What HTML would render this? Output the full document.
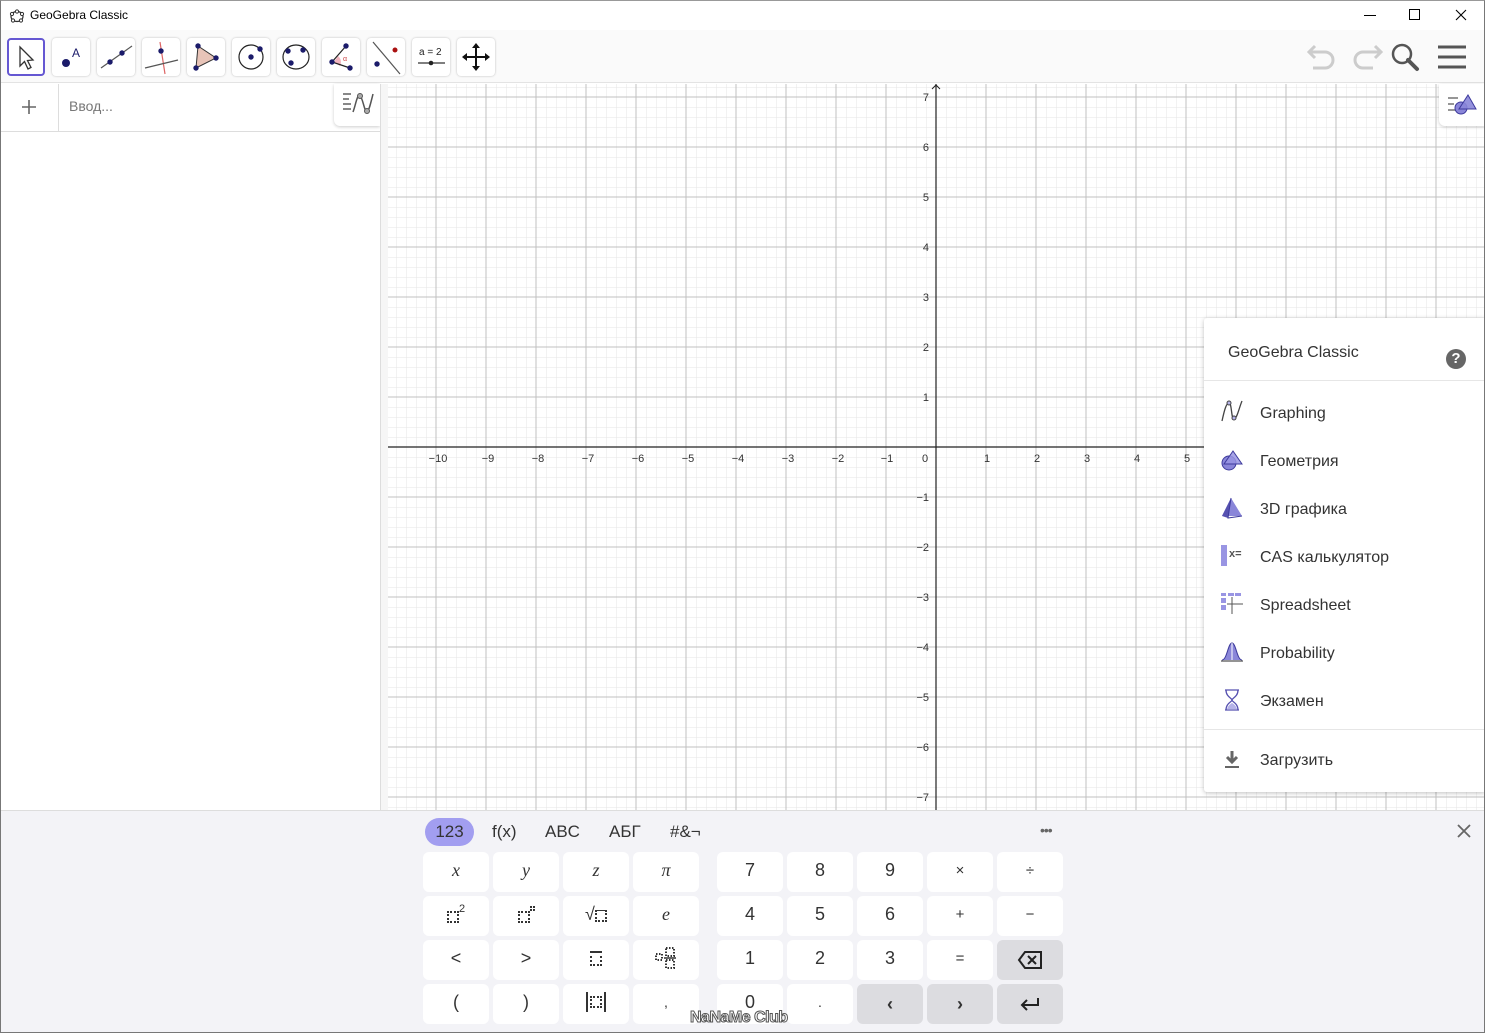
<!DOCTYPE html>
<html><head><meta charset="utf-8">
<style>
*{margin:0;padding:0;box-sizing:border-box}
body{width:1485px;height:1033px;position:relative;overflow:hidden;background:#fff;font-family:"Liberation Sans","DejaVu Sans",sans-serif;color:#333}
.abs{position:absolute}
.tb{position:absolute;top:38px;width:38px;height:38px;border-radius:4px;background:#fff;box-shadow:0 0 2px rgba(0,0,0,.25)}
.key{position:absolute;width:66px;height:40px;background:#fff;border-radius:6px;display:flex;align-items:center;justify-content:center;font-size:18px;color:#333;padding-bottom:4px}
.key.g{background:#dcdce0;padding-bottom:0}
.it{position:absolute;left:1260px;font-size:16px;color:#333;margin-top:2px}
.ic{position:absolute;left:1220px}
.db{display:inline-block;width:12px;height:12px;border:2px dotted #333}
</style></head><body>
<div class="abs" style="left:0;top:0;width:1485px;height:1033px;border:1px solid #777;border-top:1px solid #999;z-index:50;pointer-events:none"></div>
<svg class="abs" style="left:9px;top:8px" width="16" height="16" viewBox="0 0 16 16"><ellipse cx="8" cy="8.5" rx="6" ry="5" fill="none" stroke="#333" stroke-width="1.2"/><g fill="#fff" stroke="#333"><circle cx="3" cy="6" r="1.6"/><circle cx="8" cy="3.5" r="1.6"/><circle cx="13" cy="6" r="1.6"/><circle cx="12" cy="12.5" r="1.6"/><circle cx="4" cy="12.5" r="1.6"/></g></svg>
<div class="abs" style="left:30px;top:8px;font-size:12px;color:#000">GeoGebra Classic</div>
<div class="abs" style="left:1364px;top:15px;width:12px;height:1px;background:#000"></div>
<div class="abs" style="left:1409px;top:9px;width:11px;height:11px;border:1px solid #000"></div>
<svg class="abs" style="left:1455px;top:9px" width="12" height="12"><path d="M1 1L11 11M11 1L1 11" stroke="#000" stroke-width="1.1"/></svg>
<div class="abs" style="left:0;top:30px;width:1485px;height:53px;background:#fafafa;border-bottom:1px solid #e3e3e3"></div>
<div class="tb" style="left:7px;border:2px solid #6557d2;box-shadow:none"><svg width="34" height="34"><path d="M11 7L11 26L15.5 21.5L19 29L22 27.5L18.5 20.5L24 20Z" fill="#fff" stroke="#333" stroke-width="1.3"/></svg></div>
<div class="tb" style="left:52px"><svg width="38" height="38"><circle cx="14" cy="25" r="4" fill="#1b1b6a"/><text x="20" y="19" font-size="12" fill="#1b1b6a" font-family="Liberation Sans">A</text></svg></div>
<div class="tb" style="left:97px"><svg width="38" height="38"><path d="M4 30L35 8" stroke="#555" stroke-width="1.2"/><circle cx="13" cy="24" r="2.7" fill="#1b1b6a"/><circle cx="25" cy="15" r="2.7" fill="#1b1b6a"/></svg></div>
<div class="tb" style="left:142px"><svg width="38" height="38"><path d="M18 4L23 36" stroke="#d66" stroke-width="1.2"/><path d="M3 30L36 22" stroke="#555" stroke-width="1.2"/><circle cx="19" cy="13" r="2.7" fill="#1b1b6a"/></svg></div>
<div class="tb" style="left:187px"><svg width="38" height="38"><path d="M11 8L29 20L9 30Z" fill="#e8c4b8" stroke="#333" stroke-width="1"/><circle cx="11" cy="8" r="2.7" fill="#1b1b6a"/><circle cx="29" cy="20" r="2.7" fill="#1b1b6a"/><circle cx="9" cy="30" r="2.7" fill="#1b1b6a"/></svg></div>
<div class="tb" style="left:232px"><svg width="38" height="38"><circle cx="19" cy="19" r="12" fill="none" stroke="#222" stroke-width="1.2"/><circle cx="19" cy="19" r="2.7" fill="#1b1b6a"/><circle cx="28" cy="11" r="2.7" fill="#1b1b6a"/></svg></div>
<div class="tb" style="left:277px"><svg width="38" height="38"><ellipse cx="19" cy="19" rx="13" ry="12" fill="none" stroke="#222" stroke-width="1.2"/><circle cx="11" cy="13" r="2.7" fill="#1b1b6a"/><circle cx="26" cy="12" r="2.7" fill="#1b1b6a"/><circle cx="14" cy="25" r="2.7" fill="#1b1b6a"/></svg></div>
<div class="tb" style="left:322px"><svg width="38" height="38"><path d="M12 24L18 28A8 8 0 0 0 16 18Z" fill="#f3b5c0"/><path d="M24 8L10 24L28 30" fill="none" stroke="#222" stroke-width="1.2"/><circle cx="24" cy="8" r="2.7" fill="#1b1b6a"/><circle cx="10" cy="24" r="2.7" fill="#1b1b6a"/><circle cx="28" cy="30" r="2.7" fill="#1b1b6a"/><text x="21" y="23" font-size="7" fill="#c44">α</text></svg></div>
<div class="tb" style="left:367px"><svg width="38" height="38"><path d="M6 4L33 36" stroke="#555" stroke-width="1.2"/><circle cx="10" cy="26" r="2.7" fill="#1b1b6a"/><circle cx="28" cy="12" r="2.5" fill="#a11"/></svg></div>
<div class="tb" style="left:412px"><svg width="38" height="38"><text x="7" y="17" font-size="10" fill="#222" font-family="Liberation Sans">a = 2</text><path d="M6 25H33" stroke="#333" stroke-width="1.2"/><circle cx="19" cy="25" r="2.3" fill="#222"/></svg></div>
<div class="tb" style="left:457px"><svg width="38" height="38"><path d="M19 7V31M7 19H31" stroke="#111" stroke-width="2"/><path d="M19 5L15 10H23ZM19 33L15 28H23ZM5 19L10 15V23ZM33 19L28 15V23Z" fill="#111"/></svg></div>
<svg class="abs" style="left:1305px;top:42px" width="180" height="32" viewBox="0 0 180 32"><g fill="none" stroke="#ccc" stroke-width="3"><path d="M4 10H20A8 8 0 0 1 20 26H8M10 4L4 10L10 16"/><path d="M76 10H58A8 8 0 0 0 58 26H68M70 4L76 10L70 16"/></g><circle cx="97" cy="12" r="9" fill="none" stroke="#555" stroke-width="2.5"/><path d="M103 18L112 27" stroke="#555" stroke-width="4" stroke-linecap="round"/><path d="M133 5H161M133 15H161M133 25H161" stroke="#555" stroke-width="3"/></svg>
<div class="abs" style="left:0;top:84px;width:380px;height:48px;border-bottom:1px solid #ddd"></div>
<div class="abs" style="left:58px;top:84px;width:1px;height:48px;background:#ddd"></div>
<svg class="abs" style="left:21px;top:99px" width="16" height="16"><path d="M8 1V15M1 8H15" stroke="#666" stroke-width="1.6"/></svg>
<div class="abs" style="left:69px;top:98px;font-size:14px;color:#777">Ввод...</div>
<div class="abs" style="left:334px;top:84px;width:46px;height:42px;background:#fff;border-radius:0 0 0 6px;box-shadow:0 1px 3px rgba(0,0,0,.2)"><svg width="46" height="42"><path d="M9 10H17M9 15H15M9 20H17M9 25H17" stroke="#777" stroke-width="1.8"/><path d="M19 28C22 20 23 10 26 12C29 14 30 27 33 28C35 27 37 18 39 10" fill="none" stroke="#555" stroke-width="1.5"/><circle cx="26" cy="12" r="2.5" fill="#aaa" stroke="#555"/><circle cx="33" cy="27" r="2.5" fill="#aaa" stroke="#555"/></svg></div>
<div class="abs" style="left:380px;top:84px;width:1px;height:726px;background:#ddd"></div>
<div class="abs" style="left:381px;top:84px;width:7px;height:726px;background:#f6f6f6"></div>
<svg class="abs" style="left:388px;top:84px" width="1097" height="726" font-family="Liberation Sans" font-size="11" fill="#333">
<defs>
<pattern id="mn" x="-2" y="3" width="10" height="10" patternUnits="userSpaceOnUse"><path d="M0 0H10M0 0V10" stroke="#e6e6e6" stroke-width="1" fill="none"/></pattern>
<pattern id="mj" x="-2.5" y="12.5" width="50" height="50" patternUnits="userSpaceOnUse"><path d="M0 .5H50M.5 0V50" stroke="#c0c0c0" stroke-width="1" fill="none"/></pattern>
</defs>
<rect width="1097" height="726" fill="#fff"/>
<rect width="1097" height="726" fill="url(#mn)"/>
<rect width="1097" height="726" fill="url(#mj)"/>
<path d="M0 363H1097" stroke="#222" stroke-width="1.2"/>
<path d="M548 0V726" stroke="#222" stroke-width="1.2"/>
<path d="M544 5L548 1L552 5" stroke="#222" fill="none"/>
<g text-anchor="middle">
<text x="50" y="378">−10</text><text x="100" y="378">−9</text><text x="150" y="378">−8</text><text x="200" y="378">−7</text><text x="250" y="378">−6</text><text x="300" y="378">−5</text><text x="350" y="378">−4</text><text x="400" y="378">−3</text><text x="450" y="378">−2</text><text x="499" y="378">−1</text><text x="537" y="378">0</text><text x="599" y="378">1</text><text x="649" y="378">2</text><text x="699" y="378">3</text><text x="749" y="378">4</text><text x="799" y="378">5</text>
</g>
<g text-anchor="end">
<text x="541" y="17">7</text><text x="541" y="67">6</text><text x="541" y="117">5</text><text x="541" y="167">4</text><text x="541" y="217">3</text><text x="541" y="267">2</text><text x="541" y="317">1</text>
<text x="541" y="417">−1</text><text x="541" y="467">−2</text><text x="541" y="517">−3</text><text x="541" y="567">−4</text><text x="541" y="617">−5</text><text x="541" y="667">−6</text><text x="541" y="717">−7</text>
</g>
</svg>
<div class="abs" style="left:1439px;top:84px;width:46px;height:42px;background:#fff;border-radius:0 0 0 6px;box-shadow:0 1px 3px rgba(0,0,0,.2)"><svg width="46" height="42"><path d="M9 14H19M9 20H15M9 26H19" stroke="#888" stroke-width="1.8"/><circle cx="22" cy="24" r="6" fill="#8a86d9" stroke="#3d3a9c"/><path d="M29 11L37 25H20Z" fill="#8a86d9" stroke="#3d3a9c" fill-opacity=".9"/></svg></div>
<div class="abs" style="left:1204px;top:318px;width:281px;height:474px;background:#fff;box-shadow:0 1px 5px rgba(0,0,0,.25);border-radius:3px 0 0 3px"></div>
<div class="abs" style="left:1228px;top:344px;font-size:16px;color:#333">GeoGebra Classic</div>
<div class="abs" style="left:1446px;top:349px;width:20px;height:20px;border-radius:50%;background:#666;color:#fff;font-size:15px;font-weight:bold;text-align:center;line-height:20px">?</div>
<div class="abs" style="left:1204px;top:380px;width:281px;height:1px;background:#e6e6e6"></div>
<svg class="ic" style="top:400px" width="24" height="22"><path d="M2 21C4 12 6 3 9 3C12 3 11 19 14 19C17 19 19 8 22 1" fill="none" stroke="#444" stroke-width="1.3"/><circle cx="9" cy="3" r="2" fill="#b5b3e8" stroke="#444"/><circle cx="14" cy="18" r="2" fill="#b5b3e8" stroke="#444"/></svg>
<div class="it" style="top:403px">Graphing</div>
<svg class="ic" style="top:448px" width="24" height="24"><circle cx="9" cy="15" r="7" fill="#8a86d9" stroke="#3d3a9c"/><path d="M13 3L22 16H4Z" fill="#9995e3" stroke="#3d3a9c" fill-opacity=".85"/></svg>
<div class="it" style="top:451px">Геометрия</div>
<svg class="ic" style="top:496px" width="24" height="24"><path d="M11 2L22 20H2Z" fill="#8a86d9"/><path d="M11 2L8 22L2 20Z" fill="#5651b0"/><path d="M11 2L8 22L22 20" fill="none" stroke="#3d3a9c"/></svg>
<div class="it" style="top:499px">3D графика</div>
<div class="abs" style="left:1221px;top:545px;width:6px;height:21px;background:#9995e3"></div>
<div class="abs" style="left:1229px;top:548px;font-size:11px;font-weight:bold;color:#555">x=</div>
<div class="it" style="top:547px">CAS калькулятор</div>
<svg class="ic" style="top:592px" width="24" height="24"><rect x="1" y="1" width="5" height="3" fill="#9995e3"/><rect x="8" y="1" width="6" height="3" fill="#9995e3"/><rect x="15" y="1" width="6" height="3" fill="#9995e3"/><rect x="1" y="6" width="5" height="5" fill="#9995e3"/><rect x="1" y="13" width="5" height="5" fill="#9995e3"/><path d="M12 5V22M7 12H23" stroke="#555"/></svg>
<div class="it" style="top:595px">Spreadsheet</div>
<svg class="ic" style="top:640px" width="24" height="24"><path d="M2 20C7 20 8 3 12 3C16 3 17 20 22 20Z" fill="#8a86d9"/><path d="M2 20C7 20 8 3 12 3C16 3 17 20 22 20" fill="none" stroke="#3d3a9c"/><path d="M1 21H23" stroke="#555" stroke-width="1.2"/><path d="M12 3V20" stroke="#fff"/></svg>
<div class="it" style="top:643px">Probability</div>
<svg class="ic" style="top:688px" width="24" height="24"><path d="M5 2H19M5 22H19M6 2C6 9 12 10 12 12C12 14 6 15 6 22M18 2C18 9 12 10 12 12C12 14 18 15 18 22" fill="none" stroke="#5651b0" stroke-width="1.3"/><path d="M7 21C8 17 12 15 12 15C12 15 16 17 17 21Z" fill="#b5b3e8"/></svg>
<div class="it" style="top:691px">Экзамен</div>
<div class="abs" style="left:1204px;top:729px;width:281px;height:1px;background:#e6e6e6"></div>
<svg class="ic" style="top:749px" width="24" height="22"><path d="M12 2V12M7 8L12 13L17 8" fill="none" stroke="#666" stroke-width="3"/><path d="M5 18H19" stroke="#666" stroke-width="2"/></svg>
<div class="it" style="top:750px">Загрузить</div>
<div class="abs" style="left:1px;top:810px;width:1483px;height:223px;background:#f3f3f7;border-top:1px solid #ddd"></div>
<div class="abs" style="left:425px;top:818px;width:49px;height:28px;border-radius:14px;background:#a29ef0;font-size:17px;color:#333;text-align:center;line-height:28px">123</div>
<div class="abs" style="left:492px;top:822px;font-size:17px;color:#333">f(x)</div>
<div class="abs" style="left:545px;top:822px;font-size:17px;color:#333">ABC</div>
<div class="abs" style="left:609px;top:822px;font-size:17px;color:#333">АБГ</div>
<div class="abs" style="left:670px;top:822px;font-size:17px;color:#333">#&amp;¬</div>
<div class="abs" style="left:1040px;top:822px;font-size:14px;color:#666;letter-spacing:-1px">•••</div>
<svg class="abs" style="left:1457px;top:824px" width="14" height="14"><path d="M1 1L13 13M13 1L1 13" stroke="#666" stroke-width="1.8"/></svg>
<div class="key" style="left:423px;top:852px;font-family:'Liberation Serif',serif;font-style:italic">x</div>
<div class="key" style="left:493px;top:852px;font-family:'Liberation Serif',serif;font-style:italic">y</div>
<div class="key" style="left:563px;top:852px;font-family:'Liberation Serif',serif;font-style:italic">z</div>
<div class="key" style="left:633px;top:852px;font-family:'Liberation Serif',serif;font-style:italic">π</div>
<div class="key" style="left:717px;top:852px">7</div>
<div class="key" style="left:787px;top:852px">8</div>
<div class="key" style="left:857px;top:852px">9</div>
<div class="key" style="left:927px;top:852px;font-size:15px">×</div>
<div class="key" style="left:997px;top:852px;font-size:15px">÷</div>
<div class="key" style="left:423px;top:896px"><span class="db" style="margin-top:6px"></span><sup style="font-size:11px;margin-top:-10px">2</sup></div>
<div class="key" style="left:493px;top:896px"><span class="db" style="margin-top:6px"></span><span style="display:inline-block;width:5px;height:5px;border:2px dotted #333;margin-top:-12px"></span></div>
<div class="key" style="left:563px;top:896px">√<span class="db" style="border-top:1px solid #333;margin-top:4px"></span></div>
<div class="key" style="left:633px;top:896px;font-family:'Liberation Serif',serif;font-style:italic">e</div>
<div class="key" style="left:717px;top:896px">4</div>
<div class="key" style="left:787px;top:896px">5</div>
<div class="key" style="left:857px;top:896px">6</div>
<div class="key" style="left:927px;top:896px;font-size:15px">+</div>
<div class="key" style="left:997px;top:896px;font-size:15px">−</div>
<div class="key" style="left:423px;top:940px">&lt;</div>
<div class="key" style="left:493px;top:940px">&gt;</div>
<div class="key" style="left:563px;top:940px"><span class="db" style="height:15px;border-top:2px solid #333"></span></div>
<div class="key" style="left:633px;top:940px"><svg width="26" height="26"><g fill="none" stroke="#333" stroke-width="2" stroke-dasharray="1.5 1.5"><rect x="3" y="9" width="6" height="6"/><rect x="13" y="3" width="8" height="8"/><rect x="13" y="15" width="8" height="8"/></g><path d="M11 13H23" stroke="#333" stroke-width="1.5"/></svg></div>
<div class="key" style="left:717px;top:940px">1</div>
<div class="key" style="left:787px;top:940px">2</div>
<div class="key" style="left:857px;top:940px">3</div>
<div class="key" style="left:927px;top:940px;font-size:15px">=</div>
<div class="key g" style="left:997px;top:940px"><svg width="26" height="20"><path d="M8 2H24V18H8L2 10Z" fill="none" stroke="#222" stroke-width="2"/><path d="M11 6L19 14M19 6L11 14" stroke="#222" stroke-width="2"/></svg></div>
<div class="key" style="left:423px;top:984px">(</div>
<div class="key" style="left:493px;top:984px">)</div>
<div class="key" style="left:563px;top:984px"><span style="border-left:2px solid #333;border-right:2px solid #333;padding:0 2px;height:20px;display:inline-flex;align-items:center"><span class="db"></span></span></div>
<div class="key" style="left:633px;top:984px;font-size:14px">,</div>
<div class="key" style="left:717px;top:984px">0</div>
<div class="key" style="left:787px;top:984px;font-size:14px">.</div>
<div class="key g" style="left:857px;top:984px;font-weight:bold">‹</div>
<div class="key g" style="left:927px;top:984px;font-weight:bold">›</div>
<div class="key g" style="left:997px;top:984px"><svg width="22" height="16"><path d="M19 2V9H3M8 4L3 9L8 14" fill="none" stroke="#222" stroke-width="2"/></svg></div>
<div class="abs" style="left:690px;top:1009px;font-size:16px;font-weight:bold;color:#fff;-webkit-text-stroke:1px #555;letter-spacing:-.5px">NaNaMe Club</div>
</body></html>
